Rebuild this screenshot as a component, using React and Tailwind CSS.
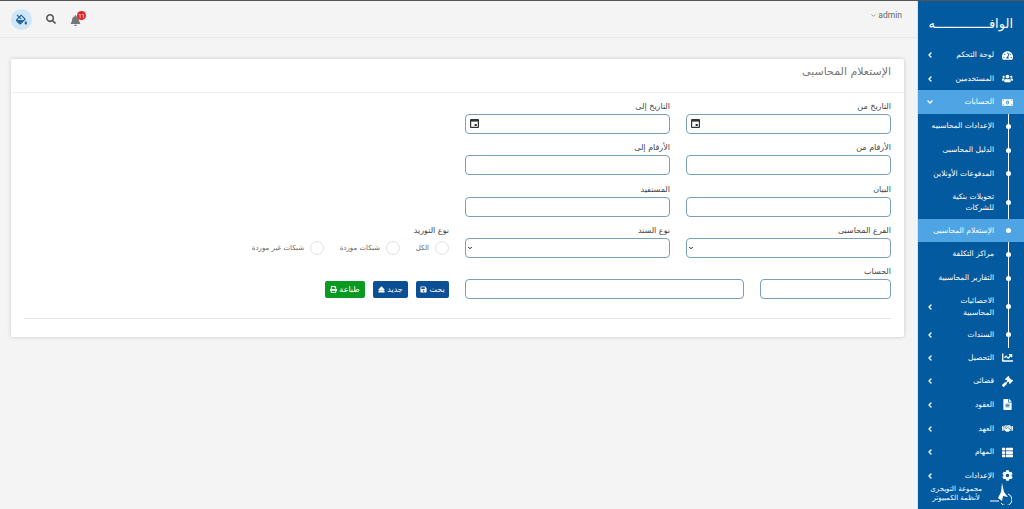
import React from 'react';
import { ChevronLeft, ChevronDown } from 'lucide-react';
import { FaBell, FaChartLine, FaCog, FaEject, FaFileAlt, FaFillDrip, FaGavel, FaHandshake, FaMoneyBillAlt, FaPrint, FaSave, FaSearch, FaTachometerAlt, FaThList, FaUsers } from 'react-icons/fa';

const menuItems = [
  { name: 'لوحة التحكم', icon: FaTachometerAlt, arrow: true, rowClass: 'h-[24px]' },
  { name: 'المستخدمين', icon: FaUsers, arrow: true, rowClass: 'h-[23px]' },
  { name: 'الحسابات', icon: FaMoneyBillAlt, open: true, rowClass: 'h-[24px]' },
];

const subItems = [
  { name: 'الإعدادات المحاسبيه', rowClass: 'h-[24px]' },
  { name: 'الدليل المحاسبى', rowClass: 'h-[24px]' },
  { name: 'المدفوعات الأونلاين', rowClass: 'h-[23px]' },
  { name: ['تحويلات بنكية', 'للشركات'], rowClass: 'h-[34px]' },
  { name: 'الإستعلام المحاسبى', active: true, rowClass: 'h-[23px]' },
  { name: 'مراكز التكلفة', rowClass: 'h-[24px]' },
  { name: 'التقارير المحاسبية', rowClass: 'h-[24px]' },
  { name: ['الاحصائيات', 'المحاسبية'], arrow: true, rowClass: 'h-[33px]' },
  { name: 'السندات', arrow: true, rowClass: 'h-[23px]' },
];

const lowerItems = [
  { name: 'التحصيل', icon: FaChartLine },
  { name: 'قضائى', icon: FaGavel },
  { name: 'العقود', icon: FaFileAlt },
  { name: 'العهد', icon: FaHandshake },
  { name: 'المهام', icon: FaThList },
  { name: 'الإعدادات', icon: FaCog },
];

const Label = ({ children }) => (
  <label className="block h-[14px] text-[8px] leading-[14px] text-[#444]">{children}</label>
);

const inputClass = 'block h-[20px] w-full rounded-[4px] border border-[#7a9fb8] bg-white text-[9px] text-[#222]';

const CalendarIcon = () => (
  <svg width="9" height="9" viewBox="0 0 9 9" className="absolute top-[5px] left-[5px]">
    <path d="M1 0h7a1 1 0 0 1 1 1v7a1 1 0 0 1-1 1H1a1 1 0 0 1-1-1V1a1 1 0 0 1 1-1z" fill="#333" />
    <rect x="1.2" y="2.6" width="6.6" height="5.2" fill="#fff" />
    <rect x="4.6" y="5" width="2.2" height="2" fill="#333" />
  </svg>
);

const Field = ({ label, date }) => (
  <div className="w-[205px]">
    <Label>{label}</Label>
    <div className="relative">
      <input type="text" className={`${inputClass} px-2`} />
      {date && <CalendarIcon />}
    </div>
  </div>
);

const SelectField = ({ label }) => (
  <div className="w-[205px]">
    <Label>{label}</Label>
    <div className="relative">
      <select className={`${inputClass} appearance-none`}>
        <option></option>
      </select>
      <ChevronDown size={6} strokeWidth={4} className="absolute top-[7px] left-[2px] text-[#111]" />
    </div>
  </div>
);

const Radio = ({ label, className }) => (
  <div className={`flex items-center gap-[6px] whitespace-nowrap pt-[1px] ${className}`}>
    <span className="h-[14px] w-[14px] shrink-0 rounded-full border border-[#e2e2e2] bg-white" />
    <span className="text-[7px] text-[#666]">{label}</span>
  </div>
);

const Sidebar = () => (
  <aside className="relative h-[509px] w-[107px] shrink-0 overflow-hidden border-l border-[#d8e4ee] bg-[#045a9e] text-white">
    {/* Logo */}
    <div className="flex h-[42px] items-center pr-[11px] pt-[3px] text-[13px] leading-none whitespace-nowrap">
      <span>الوافــــــــــــــه</span>
    </div>

    <nav className="text-[7.5px] leading-[12px]">
      {menuItems.map((item) => {
        const Icon = item.icon;
        return (
          <div key={item.name} className={`flex items-center pr-[10px] pl-[8px] ${item.rowClass} ${item.open ? 'bg-[#4fa5e3]' : ''}`}>
            <span className="flex w-[13px] justify-center"><Icon className="text-[11px]" /></span>
            <span className="mr-[7px] flex-1">{item.name}</span>
            {item.open ? <ChevronDown size={8} strokeWidth={4} /> : <ChevronLeft size={8} strokeWidth={4} />}
          </div>
        );
      })}

      {/* Accounts submenu */}
      <div className="relative">
        <div className="absolute top-0 bottom-[-2px] right-[15px] w-px bg-white" />
        {subItems.map((item, i) => (
          <div key={i} className={`relative flex items-center pl-[8px] pr-[30px] ${item.rowClass} ${item.active ? 'bg-[#4fa5e3]' : ''}`}>
            <span className="absolute right-[13px] h-[5px] w-[5px] rounded-full bg-white" />
            <span className="flex-1 leading-[11.5px]">
              {Array.isArray(item.name) ? item.name.map((line) => <span key={line} className="block">{line}</span>) : item.name}
            </span>
            {item.arrow && <ChevronLeft size={8} strokeWidth={4} />}
          </div>
        ))}
      </div>

      {lowerItems.map((item) => {
        const Icon = item.icon;
        return (
          <div key={item.name} className="flex h-[23.6px] items-center pr-[10px] pl-[8px]">
            <span className="flex w-[13px] justify-center"><Icon className="text-[11px]" /></span>
            <span className="mr-[7px] flex-1">{item.name}</span>
            <ChevronLeft size={8} strokeWidth={4} />
          </div>
        );
      })}
    </nav>

    {/* Vendor footer */}
    <div className="absolute bottom-0 left-0 right-0 flex h-[28px] items-center gap-[8px] pr-[12px] pb-[5px]">
      <svg width="22" height="22" viewBox="0 0 22 22" className="shrink-0">
        <path d="M12 0 L14 9 L18 14 L13 13 L12 18 L8 15 L11 9 Z" fill="#ffffff" />
        <path d="M0 18 H9" stroke="#ffffff" strokeWidth="1" />
        <path d="M18 11 A6 6 0 1 1 11 20" fill="none" stroke="#ffffff" strokeWidth="1" />
      </svg>
      <div className="text-center text-[7px] leading-[9px] whitespace-nowrap">
        <div>مجموعة التويجرى</div>
        <div>لأنظمة الكمبيوتر</div>
      </div>
    </div>
  </aside>
);

const Topbar = () => (
  <header className="flex h-[37px] shrink-0 items-center justify-between border-b border-[#e8e8e8] pr-[15px] pl-[11px]">
    <div className="flex items-center gap-[1px] pb-[8px] text-[8.5px] text-[#666]" dir="ltr">
      <ChevronDown size={7} />
      <span className="font-['Roboto',sans-serif]">admin</span>
    </div>
    <div className="flex items-center gap-[14px]">
      <div className="relative mt-[2px] mr-[-1px]">
        <FaBell className="text-[11px] text-[#777]" />
        <span className="absolute top-[-4px] right-[-5px] flex h-[9px] w-[9px] items-center justify-center rounded-full bg-[#e0262c] font-['Roboto',sans-serif] text-[6px] text-white">11</span>
      </div>
      <FaSearch className="text-[10px] text-[#555]" />
      <div className="flex h-[21px] w-[21px] items-center justify-center rounded-full bg-[#cfe6f8]">
        <FaFillDrip className="text-[11px] text-[#22689f]" />
      </div>
    </div>
  </header>
);

const Button = ({ icon: Icon, label, className }) => (
  <button className={`flex h-[17px] items-center justify-center gap-[2px] rounded-[2px] text-[8px] text-white ${className}`}>
    <span>{label}</span>
    <Icon className="text-[7px]" />
  </button>
);

export default function App() {
  return (
    <div dir="rtl" className="flex h-[509px] overflow-hidden border-t border-[#555] bg-[#f4f4f4] font-['DejaVu_Sans',sans-serif]">
      <Sidebar />
      <main className="flex min-w-0 flex-1 flex-col">
        <Topbar />
        <div className="mt-[21px] mr-[13px] ml-[11px] h-[278px] rounded-[2px] bg-white shadow-[0_0_4px_rgba(0,0,0,0.18)]">
          <div className="flex h-[34px] items-center border-b border-[#efefef] px-[13px] pb-[6px] text-[11px] text-[#777]">
            الإستعلام المحاسبى
          </div>
          <div className="px-[13px] pt-[7px]">
            <div className="flex flex-col gap-[7.25px]">
              <div className="flex gap-[16px]">
                <Field label="التاريخ من" date />
                <Field label="التاريخ إلى" date />
              </div>
              <div className="flex gap-[16px]">
                <Field label="الأرقام من" />
                <Field label="الأرقام إلى" />
              </div>
              <div className="flex gap-[16px]">
                <Field label="البيان" />
                <Field label="المستفيد" />
              </div>
              <div className="flex gap-[16px]">
                <SelectField label="الفرع المحاسبى" />
                <SelectField label="نوع السند" />
                <div className="w-[205px]">
                  <Label>نوع التوريد</Label>
                  <div className="flex h-[20px] items-center">
                    <Radio label="الكل" className="w-[49px]" />
                    <Radio label="شبكات موردة" className="w-[76px]" />
                    <Radio label="شبكات غير موردة" />
                  </div>
                </div>
              </div>
              <div className="flex gap-[16px]">
                <div className="w-[131px]">
                  <Label>الحساب</Label>
                  <input type="text" className={`${inputClass} px-2`} />
                </div>
                <div className="mt-[14px] w-[279px]">
                  <input type="text" className={`${inputClass} px-2`} />
                </div>
                <div className="mt-[16px] flex gap-[8px]">
                  <Button icon={FaSave} label="بحث" className="w-[33px] bg-[#0b4f94]" />
                  <Button icon={FaEject} label="جديد" className="w-[35px] bg-[#0b4f94]" />
                  <Button icon={FaPrint} label="طباعة" className="w-[40px] bg-[#0a9a22]" />
                </div>
              </div>
            </div>
            <div className="mt-[19px] border-t border-[#e5e5e5]" />
          </div>
        </div>
      </main>
    </div>
  );
}
